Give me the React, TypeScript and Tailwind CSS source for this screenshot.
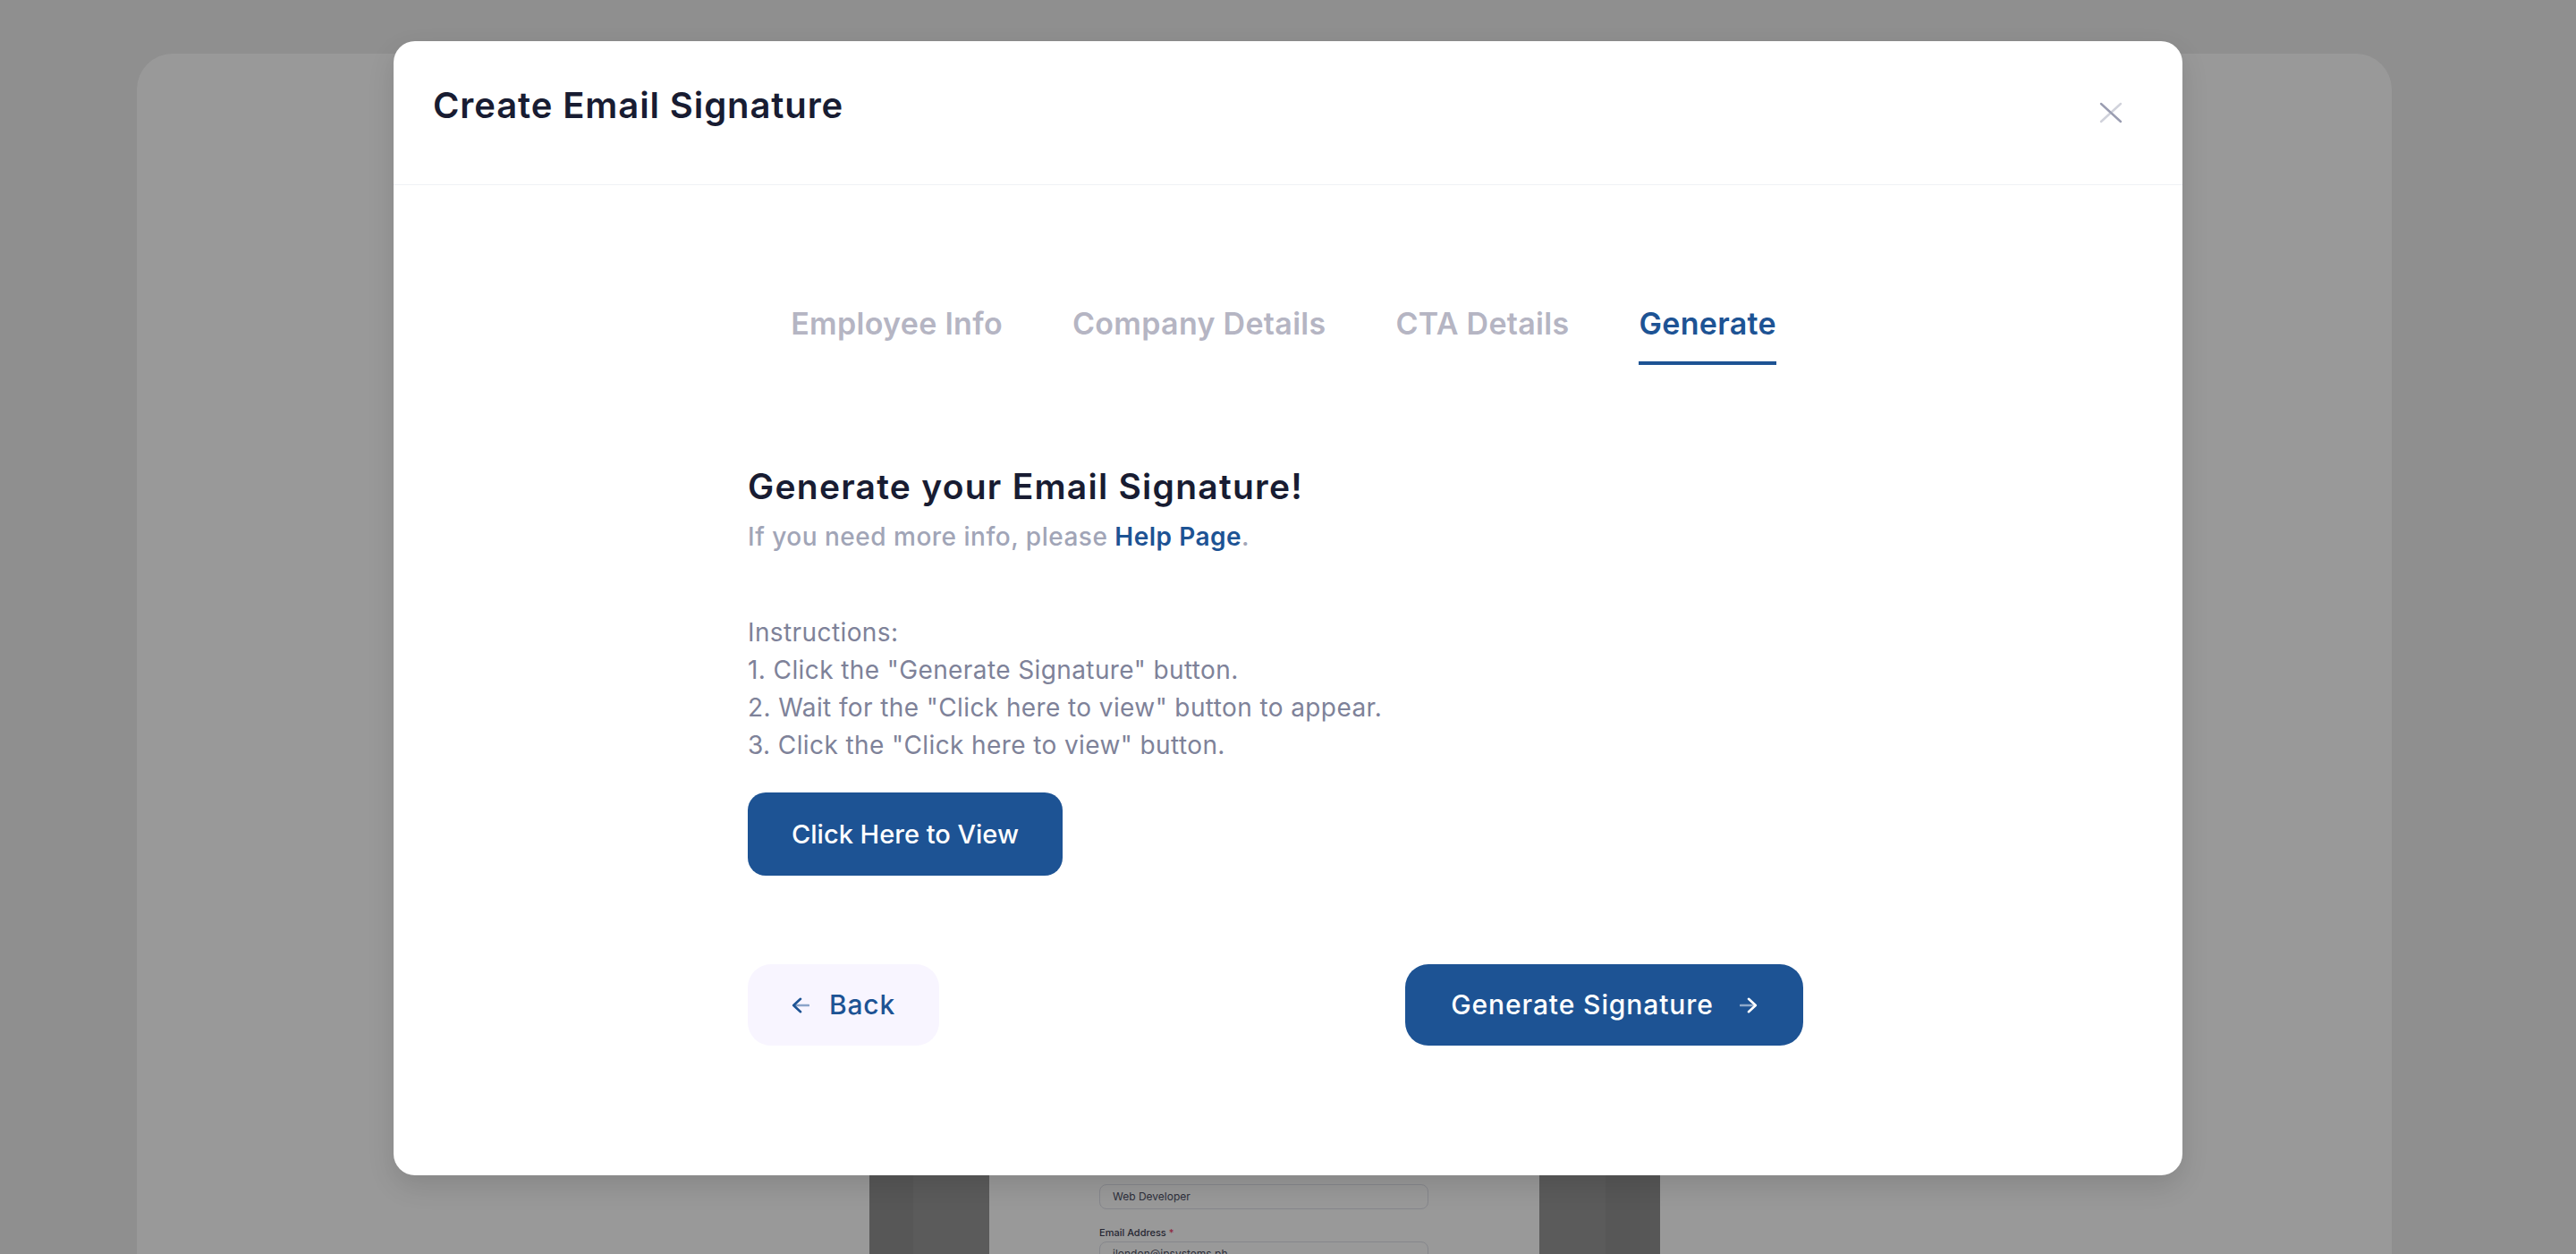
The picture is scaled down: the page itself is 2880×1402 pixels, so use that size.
import React from "react";

function CloseIcon() {
  return (
    <svg width="26" height="24" viewBox="0 0 26 24" fill="none">
      <line x1="2" y1="2" x2="24" y2="22" stroke="#9a9db1" strokeWidth="2.4" strokeLinecap="round" />
      <line x1="24" y1="2" x2="2" y2="22" stroke="#A1A5B7" strokeOpacity="0.5" strokeWidth="2.4" strokeLinecap="round" />
    </svg>
  );
}

function ArrowLeft({ color }: { color: string }) {
  return (
    <svg width="20" height="18" viewBox="0 0 20 18" fill="none">
      <path d="M3 9H19" stroke={color} strokeOpacity="0.5" strokeWidth="2.6" strokeLinecap="round" />
      <path d="M10 1.8L2.2 9L10 16.2" stroke={color} strokeWidth="2.6" strokeLinecap="round" strokeLinejoin="round" />
    </svg>
  );
}

function ArrowRight({ color }: { color: string }) {
  return (
    <svg width="20" height="18" viewBox="0 0 20 18" fill="none">
      <path d="M1 9H17" stroke={color} strokeOpacity="0.5" strokeWidth="2.6" strokeLinecap="round" />
      <path d="M10 1.8L17.8 9L10 16.2" stroke={color} strokeWidth="2.6" strokeLinecap="round" strokeLinejoin="round" />
    </svg>
  );
}

export default function App() {
  const tabs = ["Employee Info", "Company Details", "CTA Details", "Generate"];
  return (
    <div className="relative h-[1402px] w-full overflow-hidden bg-[#eeeeee] font-[Inter,sans-serif]">
      {/* underlying page */}
      <div className="ml-[153px] mr-[206px] mt-[60px] flex h-[1342px] justify-center rounded-t-[40px] bg-white">
        <div className="flex h-full w-[884px]">
          <div className="w-[49px] bg-[#919191]" />
          <div className="w-[85px] bg-[#989898]" />
          <div className="flex flex-1 flex-col items-center bg-white pt-[1264px]">
            <div className="w-[368px]">
              <div className="flex h-[28px] items-center rounded-[8px] border border-[#dfe1ea] px-[14px] text-[12px] text-[#4b4e63]">
                Web Developer
              </div>
              <div className="mt-[18px] text-[11px] leading-[16px] font-medium text-[#3f4254]">
                Email Address <span className="text-[#f1416c]">*</span>
              </div>
              <div className="mt-[2px] flex h-[28px] items-center rounded-[8px] border border-[#dfe1ea] px-[14px] text-[12px] text-[#4b4e63]">
                jlondon@ipsystems.ph
              </div>
            </div>
          </div>
          <div className="w-[74px] bg-[#989898]" />
          <div className="w-[61px] bg-[#919191]" />
        </div>
      </div>

      {/* backdrop */}
      <div className="absolute inset-0 bg-black/40" />

      {/* modal */}
      <div className="absolute left-1/2 top-[46px] h-[1268px] w-[2000px] -translate-x-1/2 rounded-[24px] bg-white shadow-[0_12px_30px_0_rgba(0,0,0,0.12)]">
        <div className="flex h-[161px] items-center justify-between border-b border-[#eff2f5] pl-[44px] pr-[56px]">
          <h2 className="mb-[16px] text-[40px] leading-[48px] font-semibold tracking-[0.9px] text-[#181c32]">Create Email Signature</h2>
          <button className="flex h-12 w-12 items-center justify-center">
            <CloseIcon />
          </button>
        </div>

        <div className="pt-[135px]">
          <div className="flex justify-center gap-[78px] pr-[10px]">
            {tabs.map((t) => (
              <div
                key={t}
                className={
                  t === "Generate"
                    ? "border-b-4 border-[#1d5394] pb-[22px] text-[34px] leading-[40px] font-semibold tracking-[0.3px] text-[#1d5394]"
                    : "border-b-4 border-transparent pb-[22px] text-[34px] leading-[40px] font-semibold tracking-[0.3px] text-[#b5b5c3]"
                }
              >
                {t}
              </div>
            ))}
          </div>

          <div className="mt-[112px] pl-[396px] pr-[424px]">
            <h3 className="text-[39px] leading-[48px] font-semibold tracking-[1.25px] text-[#181c32]">Generate your Email Signature!</h3>
            <p className="mt-[12px] text-[28px] leading-[40px] font-medium tracking-[0.5px] text-[#a1a5b7]">
              If you need more info, please <span className="font-semibold text-[#1d5394]">Help Page</span>.
            </p>

            <div className="mt-[66px] text-[28px] leading-[42px] tracking-[0.4px] text-[#7e8299]">
              <div>Instructions:</div>
              <div>1. Click the "Generate Signature" button.</div>
              <div>2. Wait for the "Click here to view" button to appear.</div>
              <div>3. Click the "Click here to view" button.</div>
            </div>

            <button className="mt-[32px] flex h-[93px] w-[352px] items-center justify-center rounded-[20px] bg-[#1d5394] text-[29px] font-medium text-white">
              Click Here to View
            </button>

            <div className="mt-[99px] flex h-[91px] items-stretch justify-between">
              <button className="flex w-[214px] items-center justify-center gap-[22px] rounded-[26px] bg-[#f8f5ff] text-[30px] font-medium tracking-[0.8px] text-[#1d5394]">
                <ArrowLeft color="#1d5394" />
                <span>Back</span>
              </button>
              <button className="flex w-[445px] items-center justify-center gap-[29px] rounded-[26px] bg-[#1d5394] text-[30px] font-medium tracking-[0.9px] text-white">
                <span>Generate Signature</span>
                <ArrowRight color="#ffffff" />
              </button>
            </div>
          </div>
        </div>
      </div>
    </div>
  );
}
